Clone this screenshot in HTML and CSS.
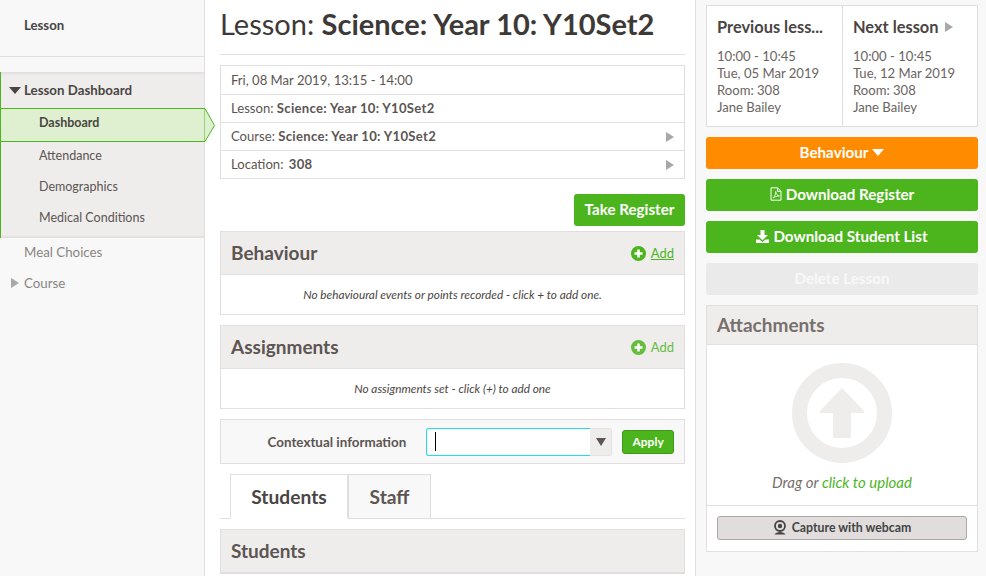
FILE: index.html
```html
<!DOCTYPE html>
<html lang="en">
<head>
<meta charset="utf-8">
<title>Lesson</title>
<link rel="stylesheet" href="styles.css">
</head>
<body>
<div class="page">
  <aside class="sidebar">
    <div class="side-title">Lesson</div>
    <nav class="side-nav">
      <div class="group">
        <div class="group-head"><span class="tri-down"></span>Lesson Dashboard</div>
        <div class="sub active">Dashboard
          <svg class="active-arrow" width="12" height="36" viewBox="0 0 12 36"><path d="M0 .5 L1 .5 L10.5 17.5 L1 33.5 L0 33.5 Z" fill="#dff0d0" stroke="#4cb51e" stroke-width="1"/></svg>
        </div>
        <div class="sub">Attendance</div>
        <div class="sub">Demographics</div>
        <div class="sub">Medical Conditions</div>
      </div>
      <div class="side-link first">Meal Choices</div>
      <div class="side-link"><span class="tri-right"></span>Course</div>
    </nav>
  </aside>

  <main class="main">
    <h1 class="title">Lesson: <b>Science: Year 10: Y10Set2</b></h1>
    <section class="info">
      <div class="info-row">Fri, 08 Mar 2019, 13:15 - 14:00</div>
      <div class="info-row">Lesson:&nbsp;<b>Science: Year 10: Y10Set2</b></div>
      <div class="info-row">Course:&nbsp;<b>Science: Year 10: Y10Set2</b><span class="tri-right end"></span></div>
      <div class="info-row">Location:&nbsp;<b class="loc">308</b><span class="tri-right end"></span></div>
    </section>
    <div class="actions"><button class="btn green take">Take Register</button></div>

    <section class="panel">
      <header class="panel-head">
        <h2>Behaviour</h2>
        <a class="add underline"><svg width="15" height="15" viewBox="0 0 15 15"><circle cx="7.5" cy="7.5" r="7.5" fill="#4cb51e"/><path d="M3.5 7.5h8M7.5 3.5v8" stroke="#fff" stroke-width="2.6"/></svg><span>Add</span></a>
      </header>
      <p class="empty">No behavioural events or points recorded - click + to add one.</p>
    </section>

    <section class="panel">
      <header class="panel-head">
        <h2>Assignments</h2>
        <a class="add faded"><svg width="15" height="15" viewBox="0 0 15 15"><circle cx="7.5" cy="7.5" r="7.5" fill="#4cb51e"/><path d="M3.5 7.5h8M7.5 3.5v8" stroke="#fff" stroke-width="2.6"/></svg><span>Add</span></a>
      </header>
      <p class="empty">No assignments set - click (+) to add one</p>
    </section>

    <section class="context">
      <label class="context-label">Contextual information</label>
      <div class="combo">
        <div class="combo-input"><span class="caret"></span></div>
        <div class="combo-toggle"><span class="tri-down dark"></span></div>
      </div>
      <button class="apply">Apply</button>
    </section>

    <div class="tabs">
      <div class="tab current">Students</div>
      <div class="tab">Staff</div>
    </div>

    <section class="panel students">
      <header class="panel-head"><h2>Students</h2></header>
    </section>
  </main>

  <aside class="right">
    <section class="lesson-nav">
      <div class="lesson-cell">
        <h3>Previous less...</h3>
        <p>10:00 - 10:45<br>Tue, 05 Mar 2019<br>Room: 308<br>Jane Bailey</p>
      </div>
      <div class="lesson-cell">
        <h3>Next lesson<span class="tri-right next"></span></h3>
        <p>10:00 - 10:45<br>Tue, 12 Mar 2019<br>Room: 308<br>Jane Bailey</p>
      </div>
    </section>
    <button class="btn orange wide">Behaviour<span class="tri-down white"></span></button>
    <button class="btn green wide">
      <svg class="ico" width="12" height="14" viewBox="0 0 12 14"><path d="M1 .8h6.5L11 4.3v8.9H1z M7.5 .8v3.5H11" fill="none" stroke="#fff" stroke-width="1"/><path d="M3 11c1.800-1.500 3-4.500 2.700-6.500C6 7 7.500 8.800 9.500 9 7 9 4.500 9.800 3 11z" fill="none" stroke="#fff" stroke-width=".8"/></svg>Download Register</button>
    <button class="btn green wide">
      <svg class="ico" width="13" height="13" viewBox="0 0 13 13"><path d="M4.500 0h4v5H12L6.500 10.300 1 5h3.500z" fill="#fff"/><path d="M0 9.500h3.500L6.500 12 9.500 9.500H13V13H0z" fill="#fff"/></svg>Download Student List</button>
    <button class="btn disabled wide">Delete Lesson</button>

    <section class="panel attach">
      <header class="panel-head"><h2>Attachments</h2></header>
      <div class="drop">
        <svg width="100" height="100" viewBox="0 0 100 100"><circle cx="50" cy="50" r="42.500" fill="none" stroke="#eeedec" stroke-width="15"/><path d="M50 25 L72 48 Q73 50 71 50 H59 V74 Q59 75 57 75 H43 Q41 75 41 74 V50 H29 Q27 50 28 48 Z" fill="#eeedec"/></svg>
        <p class="drop-text">Drag or <a>click to upload</a></p>
      </div>
      <div class="capture">
        <button class="webcam">
          <svg width="14" height="15" viewBox="0 0 14 15"><circle cx="7" cy="6" r="5" fill="none" stroke="#444" stroke-width="1.800"/><circle cx="7" cy="6" r="2.200" fill="#444"/><path d="M1.500 14.500 C3 11 11 11 12.500 14.500z" fill="#444"/></svg>Capture with webcam</button>
      </div>
    </section>
  </aside>
</div>
</body>
</html>
```
FILE: styles.css
```css
* { box-sizing: border-box; }
html, body { margin: 0; height: 576px; overflow: hidden; background: #fff; }
body { font-family: "Lato", "Noto Sans", sans-serif; font-size: 13.5px; color: #5c5552; }
button { font-family: inherit; }
.page { display: flex; height: 576px; width: 986px; overflow: hidden; }

/* sidebar */
.sidebar { width: 205px; flex: none; background: #f8f8f8; border-right: 1px solid #e0dede; }
.side-title { height: 57px; border-bottom: 1px solid #e0dede; padding: 16px 0 0 24px; font-weight: 700; font-size: 13.200px; line-height: 18px; color: #444; }
.side-nav { padding-top: 15px; }
.group { background: #eeedec; border-left: 1px solid #4cb51e; box-shadow: inset 0 3px 2px -1px #e2dfdf, inset 0 -3px 2px -1px #e2dfdf; height: 166px; }
.group-head { display: flex; align-items: center; height: 36px; padding: 0 0 0 8px; font-weight: 700; font-size: 13.300px; color: #4a4543; }
.group-head .tri-down { margin-right: 3px; }
.sub { height: 31px; line-height: 27px; padding-left: 38px; font-size: 12.500px; color: #5c5552; }
.sub.active { position: relative; height: 34px; line-height: 27px; background: #dff0d0; border-top: 1px solid #4cb51e; border-bottom: 1px solid #4cb51e; font-weight: 700; color: #4a4543; }
.active-arrow { position: absolute; left: 203px; top: -1px; }
.side-link { height: 31px; line-height: 31px; padding-left: 24px; position: relative; display: flex; align-items: center; color: #8a8583; font-size: 13.300px; }
.side-link.first { margin-top: -1px; }
.side-link .tri-right { position: absolute; left: 11px; top: 10px; }

.tri-down { display: inline-block; width: 0; height: 0; border-left: 6px solid transparent; border-right: 6px solid transparent; border-top: 7px solid #4a4543; }
.tri-down.dark { border-top-color: #5c5552; border-left-width: 5px; border-right-width: 5px; border-top-width: 8px; }
.tri-down.white { border-top-color: #fff; margin-left: 4px; }
.tri-right { display: inline-block; width: 0; height: 0; border-top: 5px solid transparent; border-bottom: 5px solid transparent; border-left: 8px solid #aaa7a5; }
.tri-right.end { margin-left: auto; }
.tri-right.next { margin-left: 6px; }

/* main */
.main { width: 491px; flex: none; padding: 0 10px 0 15px; border-right: 1px solid #e0dede; }
.title { margin: 0; height: 55px; border-bottom: 1px solid #e0dede; font-size: 29px; font-weight: 400; line-height: 48px; color: #3d3937; white-space: nowrap; }
.title b { font-weight: 700; }
.info { margin-top: 10px; border: 1px solid #e0dede; }
.info-row { display: flex; align-items: center; height: 28px; padding: 0 10px 2px; border-bottom: 1px solid #e0dede; white-space: nowrap; font-size: 13.100px; }
.info-row b { letter-spacing: .3px; }
.info-row b.loc { margin-left: 2px; }
.info-row .tri-right { margin-top: 2px; }
.info-row:first-child { height: 29px; padding-bottom: 0; }
.info-row:last-child { border-bottom: 0; height: 27px; }
.actions { display: flex; justify-content: flex-end; margin-top: 15px; }
.btn { display: flex; align-items: center; justify-content: center; border: 0; height: 32px; border-radius: 3px; color: #fff; font-weight: 700; font-size: 15.200px; padding: 0 0 2px; }
.btn.green { background: #4cb51e; }
.btn.orange { background: #ff8c00; }
.btn.disabled { background: #ebeaea; color: #f8f8f8; }
.take { width: 111px; }
.wide { width: 100%; margin-bottom: 10px; }
.ico { margin-right: 4px; }

.panel { border: 1px solid #e0dede; margin-top: 5px; }
.panel + .panel { margin-top: 10px; }
.panel-head { display: flex; align-items: center; justify-content: space-between; height: 43px; padding: 0 10px 2px; background: #eeedec; border-bottom: 1px solid #e0dede; }
.panel-head h2 { margin: 0; font-size: 19px; font-weight: 700; color: #5c5552; }
.add { display: flex; align-items: center; gap: 5px; margin-top: 2px; color: #4cb51e; font-size: 13px; }
.add.underline span { text-decoration: underline; }
.add.faded { opacity: .85; }
.empty { margin: 0; height: 39px; line-height: 40px; text-align: center; font-style: italic; font-size: 11.800px; color: #4a4543; }

.context { display: flex; align-items: center; height: 45px; margin-top: 10px; background: #f8f8f8; border: 1px solid #e0dede; padding: 0 10px 0 0; }
.context-label { width: 186px; text-align: right; font-weight: 700; font-size: 13.400px; color: #5c5552; }
.combo { display: flex; height: 28px; margin-left: 20px; }
.combo-input { width: 164px; background: #fff; border: 1px solid #1fdcec; border-right: 0; border-radius: 3px 0 0 3px; display: flex; align-items: center; padding-left: 8px; }
.caret { width: 1px; height: 19px; background: #000; }
.combo-toggle { width: 22px; background: #eeedec; border: 1px solid #e4e2e1; border-left: 0; border-radius: 0 3px 3px 0; display: flex; align-items: center; justify-content: center; }
.apply { width: 52px; height: 24px; margin-left: 10px; background: #4cb51e; border: 1px solid #3f9a18; border-radius: 3px; color: #fff; font-weight: 700; font-size: 12px; padding: 0; }

.tabs { display: flex; height: 45px; margin-top: 10px; padding-left: 10px; border-bottom: 1px solid #e0dede; }
.tab { height: 45px; width: 82px; background: #f8f8f8; border: 1px solid #e0dede; text-align: center; line-height: 43px; font-size: 19.200px; font-weight: 700; color: #5c5552; }
.tab.current { width: 119px; background: #fff; border-bottom-color: #fff; border-right-width: 2px; color: #4a4543; }
.tab + .tab { border-left: 0; }
.panel.students { margin-top: 10px; }

/* right */
.right { width: 290px; flex: none; background: #f8f8f8; padding: 5px 8px 0 10px; }
.lesson-nav { display: flex; height: 122px; margin-bottom: 10px; background: #fff; border: 1px solid #e0dede; }
.lesson-cell { width: 135px; flex: none; padding: 0 10px; }
.lesson-cell + .lesson-cell { border-left: 1px solid #e0dede; flex: 1; }
.lesson-cell h3 { margin: 11px 0 11px; display: flex; align-items: center; font-size: 16.400px; line-height: 20px; font-weight: 700; color: #4a4543; white-space: nowrap; }
.lesson-cell p { margin: 0; font-size: 13.100px; line-height: 17px; color: #6a6461; white-space: nowrap; }
.panel.attach { margin-top: 0; background: #fff; }
.attach .panel-head { height: 39px; }
.attach h2 { color: #78706c; }
.drop { display: flex; flex-direction: column; align-items: center; height: 161px; border-bottom: 1px solid #e0dede; padding-top: 18px; }
.drop-text { margin: 10px 0 0; font-style: italic; font-size: 15px; color: #78706c; }
.drop-text a { color: #4cb51e; }
.capture { padding: 10px; height: 45px; }
.webcam { display: flex; align-items: center; justify-content: center; gap: 5px; width: 100%; height: 24px; background: #e0dddc; border: 1px solid #aaa7a5; border-radius: 3px; font-weight: 700; font-size: 12.300px; color: #444; padding: 0 0 1px; }
```
